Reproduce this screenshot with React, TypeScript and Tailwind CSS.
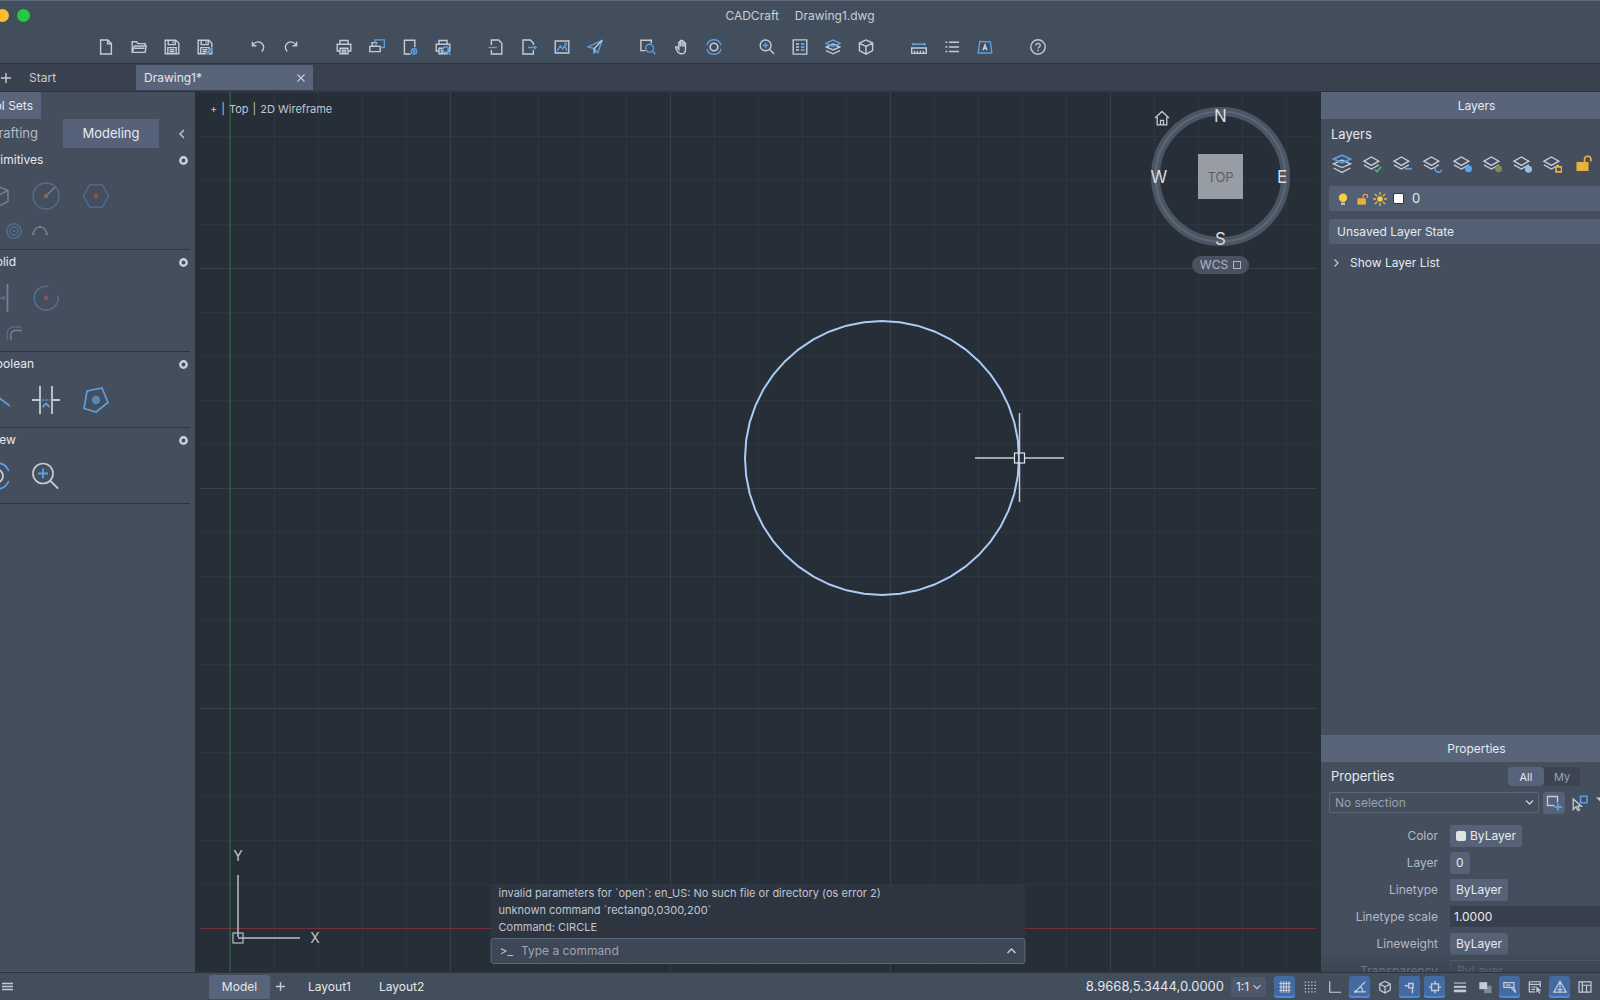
import React from 'react';

const LIGHT = '#c4cbd7';
const BLUE = '#5b9fe3';
const AMBER = '#e9b23c';

type IconProps = {
  className?: string;
  box?: number;
  children: React.ReactNode;
};

function Icon({ className = 'size-4', box = 16, children }: IconProps) {
  return (
    <svg
      className={`shrink-0 ${className}`}
      viewBox={`0 0 ${box} ${box}`}
      fill="none"
      stroke={LIGHT}
      strokeWidth={1.4}
      aria-hidden="true"
    >
      {children}
    </svg>
  );
}

const printer = (
  <>
    <path d="M4 5V1.500h8V5M4 12H1.200V5.200h13.600V12H12" />
    <path d="M4 9.200h8v5.600H4zM5.600 11.200h4.800M5.600 13h4.800" />
  </>
);

const floppy = (
  <>
    <path d="M1.200 1.200h10.600l3 3v10.600H1.200z" />
    <path d="M4.200 1.200v4.400h7V1.200M3.800 14.800V8.600h8.400v6.200M5.600 10.800h4.800M5.600 12.800h4.800M9 2.600v1.600" />
  </>
);

// Toolbar groups, left to right
const toolbar = [
  [
    { name: 'New', icon: <path d="M2.600 1h7.200l3.600 3.600V15H2.600zM9.600 1.200v3.600h3.600" /> },
    { name: 'Open', icon: <path d="M1.200 13.400V2.800h4.400l1.200 1.800h7.400v2.400M1.200 13.400 3.400 7h11.800l-1 6.400zM3.600 9.200h10" /> },
    { name: 'Save', icon: floppy },
    {
      name: 'Save As',
      icon: (
        <>
          {floppy}
          <path d="m9 15.600.8-2.600 5-5 1.800 1.800-5 5z" fill={BLUE} stroke="#434e5d" strokeWidth={0.5} />
        </>
      ),
    },
  ],
  [
    { name: 'Undo', icon: <path d="M2.400 2.800v4h4M2.600 6.400C4.600 3.400 8 2.200 10.800 3.600c3.400 1.800 3.800 6 1 9" /> },
    { name: 'Redo', icon: <path d="M13.600 2.800v4h-4M13.400 6.400C11.400 3.400 8 2.200 5.200 3.600c-3.400 1.800-3.800 6-1 9" /> },
  ],
  [
    { name: 'Print', icon: printer },
    {
      name: 'Batch Print',
      icon: (
        <>
          <path d="M3 7.400V3.600h5M.8 7.400h10.400v5.200H.8zM3.400 7.200h5.400" />
          <path d="M6 4V.9h9.400v7.600h-4" stroke={BLUE} />
          <path d="M5.600 6.800 8.200 4.200" stroke={BLUE} />
        </>
      ),
    },
    {
      name: 'Page Setup',
      icon: (
        <>
          <path d="M8.600 15H2.400V1.200h10.400v7" />
          <circle cx="12" cy="12.400" r="2.600" stroke={BLUE} />
          <circle cx="12" cy="12.400" r=".6" stroke={BLUE} />
        </>
      ),
    },
    {
      name: 'Print Preview',
      icon: (
        <>
          {printer}
          <circle cx="10.600" cy="10.600" r="2.800" stroke={BLUE} fill="#434e5d" strokeWidth={1.600} />
          <path d="m12.600 12.800 2.800 2.800" stroke={BLUE} strokeWidth={1.700} />
        </>
      ),
    },
  ],
  [
    {
      name: 'Import',
      icon: (
        <>
          <path d="M3.400 6V1h7.200l3.200 3.200V15H3.400v-4" />
          <path d="M.4 8.500h8.400" stroke={BLUE} />
        </>
      ),
    },
    {
      name: 'Export',
      icon: (
        <>
          <path d="M12.400 6V4.200L9.400 1H2v14h10.400v-4" />
          <path d="M7 8.500h8.400M13.400 6.900l1.800 1.600-1.800 1.600" stroke={BLUE} />
        </>
      ),
    },
    {
      name: 'Insert Image',
      icon: (
        <>
          <path d="M1.200 2h13.600v12H1.200z" />
          <path d="m3 12 3.400-5 2.400 3 2-3.600L13 12M10.200 4.400h2.200v2.200" stroke={BLUE} />
        </>
      ),
    },
    {
      name: 'Share',
      icon: (
        <>
          <path d="m.9 7.800 14.200-6.400L10.800 13.800 7.200 9.600z" stroke={BLUE} />
          <path d="M7.200 14.600V9.600l7.900-8.200" />
          <path d="m6.600 14.400 2.600-2.600" stroke={BLUE} />
        </>
      ),
    },
  ],
  [
    {
      name: 'Zoom Window',
      icon: (
        <>
          <path d="M5.400 11.600H.9V1.200h10.400v3" />
          <circle cx="9.600" cy="9.200" r="3.900" stroke={BLUE} />
          <path d="m12.400 12 3 3.200" stroke={BLUE} />
        </>
      ),
    },
    {
      name: 'Pan',
      icon: (
        <path
          d="M5 9V3.600c0-1.200 1.600-1.200 1.600 0V7.500 2.200c0-1.300 1.800-1.300 1.800 0v5.200-4.600c0-1.200 1.700-1.200 1.700 0v5-3.200c0-1.200 1.600-1.200 1.600 0v5.600c0 3-1.600 4.600-4.200 4.600-2.400 0-3.400-1.200-4.200-3L1.900 8.900c-.4-1.200 1-1.700 1.600-.7L5 10.400z"
          transform="translate(.8 0)"
        />
      ),
    },
    {
      name: 'Orbit',
      icon: (
        <>
          <circle cx="8" cy="8" r="3.800" strokeWidth={1.600} />
          <path d="M1 6.200A7.200 7.200 0 0 1 15 6.200M15 9.800A7.200 7.200 0 0 1 1 9.800" stroke={BLUE} />
        </>
      ),
    },
  ],
  [
    {
      name: 'Zoom In',
      icon: (
        <>
          <circle cx="6.600" cy="6.400" r="5.400" />
          <path d="m10.600 10.400 4.600 4.600" />
          <path d="M6.600 3.600v5.600M3.800 6.400h5.600" stroke={BLUE} strokeWidth={1.600} />
        </>
      ),
    },
    {
      name: 'Properties',
      icon: (
        <>
          <path d="M1.200.9h13.600v14.200H1.200zM4 5h3M4 8h3M4 11h3" />
          <path d="M9 5h3.400M9 8h3.400M9 11h3.400" stroke={BLUE} strokeWidth={1.800} />
        </>
      ),
    },
    {
      name: 'Layers',
      icon: (
        <>
          <path d="m8 5 6.800 3L8 11 1.200 8zM1 11.600l7 3.200 7-3.200" />
          <path d="M1 4.400 8 1l7 3.400L8 7.600z" stroke={BLUE} />
        </>
      ),
    },
    { name: '3D View', icon: <path d="M8 .9 14.600 4v7.600L8 15.100 1.400 11.600V4zM1.400 4 8 7.400 14.600 4M8 7.400v7.700" /> },
  ],
  [
    {
      name: 'Measure',
      icon: (
        <>
          <path d="M.7 9h14.600v5.400H.7zM3.600 11.800v2.400M6.400 11.800v2.400M9.400 11.800v2.400M12.400 11.800v2.400" />
          <path d="M1 5.200h14" stroke={BLUE} strokeWidth={1.700} />
          <path d="M2.500 3.800v2.800M13.500 3.800v2.800" stroke={BLUE} strokeWidth={1} />
        </>
      ),
    },
    { name: 'List', icon: <path d="M5 3.200h10M5 8h10M5 12.600h10M1.400 3.200h2M1.400 8h2M1.400 12.600h2" strokeWidth={1.500} /> },
    {
      name: 'Text Style',
      icon: (
        <>
          <path d="M2.800 2.400 13.400 3l1.400 11H1.200z" stroke={BLUE} />
          <path d="m6 11.200 2-5.400 2 5.400M6.600 9.600h2.800" strokeWidth={1.500} />
        </>
      ),
    },
  ],
  [
    {
      name: 'Help',
      icon: (
        <>
          <circle cx="8" cy="8" r="7.200" />
          <path d="M5.900 6.400c0-2.700 4.300-2.700 4.300 0 0 1.600-2.100 1.500-2.100 3.100M8.100 10.800v1.500" />
        </>
      ),
    },
  ],
];

type Tool = { name: string; icon: React.ReactNode; dim?: boolean };
type Section = { title: string; large: Tool[]; small?: Tool[] };

const sections: Section[] = [
  {
    title: 'Primitives',
    large: [
      { name: 'Box', dim: true, icon: <path d="M14 3.500 26 8.500v11l-12 6-12-6v-11zM2 8.500l12 6 12-6M14 14.500v11" /> },
      {
        name: 'Sphere',
        dim: true,
        icon: (
          <>
            <circle cx="14" cy="14" r="13" stroke={BLUE} />
            <path d="m14 14 9-9" />
            <circle cx="14" cy="14" r="2.200" fill="#f08a40" stroke="none" />
          </>
        ),
      },
      {
        name: 'Prism',
        dim: true,
        icon: (
          <>
            <path d="M7.500 3h13L26.500 14l-6 11h-13L1.500 14z" stroke={BLUE} />
            <circle cx="14" cy="14" r="2.400" fill="#e0604a" stroke="none" />
          </>
        ),
      },
    ],
    small: [
      { name: 'Cylinder', dim: true, icon: <circle cx="8" cy="8" r="6" /> },
      {
        name: 'Torus',
        dim: true,
        icon: (
          <>
            <circle cx="8" cy="8" r="7.200" stroke={BLUE} />
            <circle cx="8" cy="8" r="4" stroke={BLUE} />
            <circle cx="8" cy="8" r="1" fill={LIGHT} stroke="none" />
          </>
        ),
      },
      {
        name: 'Arc',
        dim: true,
        icon: (
          <>
            <path d="M1 11C3.500 1.500 12.500 1.500 15 11" />
            <path d="M.2 10h2v2h-2zM13.800 10h2v2h-2zM7 2.800h2v2H7z" fill={LIGHT} stroke="none" />
          </>
        ),
      },
    ],
  },
  {
    title: 'Solid',
    large: [
      {
        name: 'Extrude',
        dim: true,
        icon: (
          <>
            <path d="M25.500 0v28M3 0v28" strokeWidth={1.800} />
            <path d="M12 14h9" stroke={BLUE} />
            <circle cx="21.500" cy="14" r="2" fill={BLUE} stroke="none" />
          </>
        ),
      },
      {
        name: 'Revolve',
        dim: true,
        icon: (
          <>
            <path d="M16 2.200A12 12 0 1 0 26 12" stroke={BLUE} strokeWidth={1.700} />
            <circle cx="14" cy="14" r="2.200" fill="#e0704a" stroke="none" />
          </>
        ),
      },
    ],
    small: [
      { name: 'Fillet', dim: true, icon: <path d="M1 15V8q0-6 7-6h7" /> },
      {
        name: 'Offset',
        dim: true,
        icon: (
          <>
            <path d="M1.200 15V9Q1.200 2 8 2h7" stroke={BLUE} />
            <path d="M4.800 15v-5q0-4.500 4.500-4.500H16" />
          </>
        ),
      },
    ],
  },
  {
    title: 'Boolean',
    large: [
      { name: 'Union', icon: <path d="M4 2 28 20" stroke={BLUE} strokeWidth={1.800} /> },
      {
        name: 'Trim',
        icon: (
          <>
            <path d="M8 0v28M20 0v28M0 14h8M20 14h8" strokeWidth={1.800} />
            <path d="M10 14h8" stroke={BLUE} strokeDasharray="2 1.500" />
            <path d="m10.500 21 3.500-3.500 3.500 3.500" stroke={BLUE} strokeWidth={1.800} />
          </>
        ),
      },
      {
        name: 'Polysolid',
        icon: (
          <>
            <path d="M5 5 20 2l6 14.500L14 26 2 22.500z" stroke={BLUE} strokeWidth={1.700} />
            <circle cx="14" cy="14" r="4.200" fill={BLUE} fillOpacity={0.7} stroke="none" />
          </>
        ),
      },
    ],
  },
  {
    title: 'View',
    large: [
      {
        name: 'Orbit View',
        icon: (
          <>
            <circle cx="14" cy="14" r="7" strokeWidth={1.800} />
            <path d="M2 9A13.500 13.500 0 0 1 26.800 9M26.800 19A13.500 13.500 0 0 1 2 19" stroke={BLUE} strokeWidth={1.800} />
          </>
        ),
      },
      {
        name: 'Zoom View',
        icon: (
          <>
            <circle cx="11" cy="11.500" r="10" strokeWidth={1.700} />
            <path d="m18.200 18.700 8 8" strokeWidth={1.900} />
            <path d="M11 6.500v10M6 11.500h10" stroke={BLUE} strokeWidth={1.800} />
          </>
        ),
      },
    ],
  },
];

const sheet = <path d="M2 7.200 9.400 3l7.400 4.200-7.400 4.200zM2 10.800l7.400 4.200 7.400-4.200" />;

const openLock = (
  <>
    <path d="M3.500 9h12v9h-12z" fill={AMBER} stroke="none" />
    <path d="M11.500 9V6.500a3.200 3.200 0 0 1 6.400 0v2" stroke={AMBER} strokeWidth={1.600} />
  </>
);

const layerTools: Tool[] = [
  {
    name: 'Layer manager',
    icon: (
      <>
        <path d="M1.500 9.800 10 6l8.500 3.800L10 13.600zM1.500 14l8.500 4.400 8.500-4.400" />
        <path d="M1.500 5 10 1.200 18.500 5 10 8.800z" stroke={BLUE} strokeWidth={1.600} />
      </>
    ),
  },
  { name: 'Make current', icon: <>{sheet}<path d="m13 15.500 2 2.300 4.200-5" stroke="#52b56b" strokeWidth={1.600} /></> },
  { name: 'Previous layer', icon: <>{sheet}<path d="M13 14.800h7" stroke={BLUE} strokeWidth={1.800} /></> },
  { name: 'Match layer', icon: <>{sheet}<path d="M14 12.500a3.400 3.400 0 1 0 5.800 3.200" stroke={BLUE} strokeWidth={1.700} /></> },
  { name: 'Isolate layer', icon: <>{sheet}<circle cx="16.500" cy="14.800" r="3.500" fill="#55a5f2" stroke="none" /></> },
  { name: 'Hide layer', icon: <>{sheet}<circle cx="16.500" cy="14.800" r="3.500" fill="#868852" stroke="none" /></> },
  { name: 'Freeze layer', icon: <>{sheet}<circle cx="16.500" cy="15.200" r="3.500" fill="#93bfe8" stroke="none" /></> },
  { name: 'Lock layer', icon: <>{sheet}<path d="M14 12.800h5.600v5H14z" stroke={AMBER} strokeWidth={1.700} /></> },
  { name: 'Unlock layer', icon: <g transform="translate(1 -1)">{openLock}</g> },
];

const statusTools = [
  { name: 'Grid', on: true, icon: <path d="M1.500 4h13M1.500 8h13M1.500 12h13M3.500 1.500v13M6.500 1.500v13M9.500 1.500v13M12.500 1.500v13" /> },
  { name: 'Snap', on: false, icon: <path d="M2 2.500h13M2 6.200h13M2 9.900h13M2 13.600h13" strokeDasharray="1.500 2.200" strokeWidth={1.500} /> },
  { name: 'Ortho', on: false, icon: <path d="M2 1.500V14h13" /> },
  {
    name: 'Polar tracking',
    on: true,
    icon: (
      <>
        <path d="M14 2 2.500 13.500H15M8.500 8q3 2 2.500 5.500" />
        <circle cx="2.800" cy="13.200" r="1.500" fill={LIGHT} stroke="none" />
      </>
    ),
  },
  { name: 'Isometric', on: false, icon: <path d="M8 1.500 14 4.500v7L8 14.800 2 11.500v-7zM2 4.500 8 7.800l6-3.300M8 7.800v7" /> },
  { name: 'Object tracking', on: true, icon: <path d="M2 6.500h4M6.500 4h5v5h-5zM10.800 9v6" strokeWidth={1.600} /> },
  { name: 'Object snap', on: true, icon: <path d="M4 4.500h8v7.500H4zM8 1v3.500M8 12v3.500M1 8.200h3M12 8.200h3" strokeWidth={1.500} /> },
  {
    name: 'Lineweight display',
    on: false,
    icon: (
      <>
        <path d="M1 3.500h14" strokeWidth={1.200} />
        <path d="M1 7.800h14" strokeWidth={2.200} />
        <path d="M1 12.500h14" strokeWidth={3} />
      </>
    ),
  },
  {
    name: 'Transparency display',
    on: false,
    icon: (
      <>
        <path d="M7 6.500h8.500V15H7z" fill="#7f8897" stroke="none" />
        <path d="M1.500 2.500h9v8h-9z" fill={LIGHT} stroke="none" />
      </>
    ),
  },
  { name: 'Dynamic input', on: true, icon: <path d="M1 3h11.500v5.500H1zM3.500 5.800h5M9.500 9l5 5.500M12.500 8.500l2 6" /> },
  {
    name: 'Quick properties',
    on: false,
    icon: (
      <>
        <path d="M1.500 2h12.500v6M8 13.500H1.500V2M1.500 5h12.500M4 8h6M4 10.800h4" />
        <path d="m9.500 7.500 6 4.500-2.800.4 1.300 2.800-1.300.5-1.300-2.800-1.900 1.700z" fill={LIGHT} stroke="none" />
      </>
    ),
  },
  { name: 'Annotation monitor', on: true, icon: <path d="M8 1.500 15 13.800H1zM8 1.500v12.300M5 11h6" /> },
  { name: 'Workspace', on: false, icon: <path d="M1.200 2.200h13.600v11.600H1.200zM5 2.200v11.600M5 6h9.800M9.800 6v7.800" /> },
];

const CENTER = { x: 682, y: 366 };
const RADIUS = 137;
const SEGMENTS = 48;

// The viewport tessellates circles, so this is a many-sided polygon
const circlePoints = Array.from({ length: SEGMENTS }, (_, i) => {
  const angle = (i / SEGMENTS) * Math.PI * 2;
  return `${(CENTER.x + RADIUS * Math.cos(angle)).toFixed(2)},${(CENTER.y + RADIUS * Math.sin(angle)).toFixed(2)}`;
}).join(' ');

function TitleBar() {
  return (
    <header className="shrink-0 border-t border-b border-t-[#5c6a7b] border-b-[#2c3541] bg-[#434e5d]">
      <div className="grid h-[29px] grid-cols-[1fr_auto_1fr] items-center">
        <div className="flex gap-2 pl-[7px]">
          <button aria-label="Close window" className="size-[13px] rounded-full bg-[#ff5f57]" />
          <button aria-label="Minimize window" className="size-[13px] rounded-full bg-[#febc2e]" />
          <button aria-label="Zoom window" className="size-[13px] rounded-full bg-[#28c840]" />
        </div>
        <h1 className="flex gap-4 text-[12px] text-[#c8cfd9]">
          <span>CADCraft</span>
          <span>Drawing1.dwg</span>
        </h1>
      </div>
      <div className="flex h-[33px] items-center gap-[37px] pl-[130px]">
        {toolbar.map((group) => (
          <div key={group[0].name} className="flex gap-[17px]">
            {group.map((tool) => (
              <button key={tool.name} aria-label={tool.name}>
                <Icon>{tool.icon}</Icon>
              </button>
            ))}
          </div>
        ))}
      </div>
    </header>
  );
}

function FileTabs() {
  return (
    <nav aria-label="Open files" className="flex h-7 shrink-0 items-center border-b border-[#2b333e] bg-[#39414e] text-[12px]">
      <button aria-label="New tab" className="ml-8 flex w-3 justify-center">
        <Icon className="size-3" box={12}>
          <path d="M6 1v10M1 6h10" />
        </Icon>
      </button>
      <button className="w-[124px] pl-[17px] text-left text-[#c3cad5]">Start</button>
      <div className="flex h-[25px] w-[177px] items-center justify-between bg-[#58647a] px-2">
        <button className="text-[#e2e7ee]">Drawing1*</button>
        <button aria-label="Close Drawing1">
          <Icon className="size-2" box={8}>
            <path d="m.5.5 7 7M7.500.5l-7 7" strokeWidth={1.200} />
          </Icon>
        </button>
      </div>
    </nav>
  );
}

function ToolSets() {
  return (
    <aside className="flex w-[227px] shrink-0 flex-col bg-[#454e5d] text-[12px] text-[#e6eaf0]">
      <h2 className="h-[27px] w-[73px] bg-[#58647a] pr-2 text-right leading-[27px] whitespace-nowrap">Tool Sets</h2>
      <div className="flex h-[29px] items-stretch">
        <button className="w-[95px] pr-[25px] text-right text-[13px] text-[#b3bac6]">Drafting</button>
        <button className="w-24 bg-[#56627a] text-[13px]">Modeling</button>
        <button aria-label="Collapse tool sets" className="ml-[18px]">
          <Icon className="size-[10px]" box={10}>
            <path d="M7 1 3 5l4 4" />
          </Icon>
        </button>
      </div>
      {sections.map((section) => (
        <section key={section.title} className="mr-[5px] border-b border-[#2c3544] pb-[5px]">
          <div className="flex h-6 items-center justify-between pr-[2px] pl-5">
            <h3>{section.title}</h3>
            <button aria-label={`${section.title} settings`}>
              <Icon className="size-[9px]" box={9}>
                <circle cx="4.500" cy="4.500" r="3.200" strokeWidth={2.400} stroke="#ccd3dd" />
              </Icon>
            </button>
          </div>
          <div className="flex h-[46px] items-center gap-[22px] pt-[2px] pl-[14px]">
            {section.large.map((tool) => (
              <button key={tool.name} aria-label={tool.name} className={tool.dim ? 'opacity-40' : ''}>
                <Icon className="size-7" box={28}>{tool.icon}</Icon>
              </button>
            ))}
          </div>
          {section.small && (
            <div className="flex h-[26px] items-center gap-[10px] pl-3">
              {section.small.map((tool) => (
                <button key={tool.name} aria-label={tool.name} className={tool.dim ? 'opacity-40' : ''}>
                  <Icon>{tool.icon}</Icon>
                </button>
              ))}
            </div>
          )}
        </section>
      ))}
    </aside>
  );
}

function Drawing() {
  return (
    <svg className="absolute inset-y-0 left-[5px] h-full w-[calc(100%-10px)]" fill="none" aria-label="Model space">
      <defs>
        <pattern id="minor" width="44" height="44" patternUnits="userSpaceOnUse" patternTransform="translate(30 836)">
          <path d="M.5 0v44M0 .5h44" stroke="#2d3540" />
        </pattern>
        <pattern id="major" width="220" height="220" patternUnits="userSpaceOnUse" patternTransform="translate(30 836)">
          <path d="M.5 0v220M0 .5h220" stroke="#38414b" />
        </pattern>
      </defs>
      <rect width="100%" height="100%" fill="url(#minor)" />
      <rect width="100%" height="100%" fill="url(#major)" />
      <line x1="0" x2="100%" y1="836.500" y2="836.500" stroke="#74303a" />
      <line x1="30" x2="30" y1="0" y2="100%" stroke="#2a6a3a" />

      <polygon points={circlePoints} stroke="#a9cdf5" strokeWidth="2" />
      <path d="M775 366h39.500M824.500 366H864M819.500 321v39.500M819.500 370.500V410" stroke="#c9ced6" strokeWidth="1.500" />
      <rect x="814.500" y="361" width="10" height="10" stroke="#e3e6ea" strokeWidth="1.200" />

      <path d="M38 783v62M38 846h62" stroke="#b9bfc9" strokeWidth="1.500" />
      <rect x="33" y="841" width="10" height="10" stroke="#b9bfc9" strokeWidth="1.200" />
      <g fill="#bdc3cc" fontSize="14" textAnchor="middle">
        <text x="38" y="769">Y</text>
        <text x="115" y="851">X</text>
      </g>
    </svg>
  );
}

function ViewCube() {
  return (
    <div className="absolute top-[14px] right-[30px] flex flex-col items-center">
      <button aria-label="Home view" className="absolute top-1 left-1">
        <Icon>
          <path d="M1 8 8 1.500 15 8M3.200 7v7.800h9.600V7M6.500 14.800v-4.500h3v4.500" strokeWidth={1.300} />
        </Icon>
      </button>
      <svg className="size-[141px]" viewBox="0 0 141 141" fill="none" role="img" aria-label="Top view, north up">
        <circle cx="70.500" cy="70.500" r="65" stroke="#4c5563" strokeWidth="9" />
        <circle cx="70.500" cy="70.500" r="65" stroke="#5d6675" strokeWidth="2" />
        <path d="M48 48h45v45H48z" fill="#989da5" />
        <text x="70.500" y="75.500" textAnchor="middle" fontSize="13" fill="#585e69">TOP</text>
        <g fill="#d5dae1" fontSize="17" textAnchor="middle">
          <text x="70.500" y="16">N</text>
          <text x="70.500" y="139">S</text>
          <text x="9" y="77">W</text>
          <text x="132" y="77">E</text>
        </g>
      </svg>
      <button className="mt-[9px] flex h-[18px] items-center gap-[5px] rounded-full bg-[#4a5160] px-2 text-[12px] text-[#aeb5c0]">
        WCS
        <span className="size-2 border border-[#aeb5c0]" />
      </button>
    </div>
  );
}

function CommandLine() {
  return (
    <div className="absolute bottom-2 left-1/2 w-[535px] max-w-full -translate-x-1/2">
      <div className="bg-[#2f3642]/85 px-2 pt-px pb-[2px] text-[11px] leading-[17px] text-[#c0c7d2]">
        <p>invalid parameters for `open`: en_US: No such file or directory (os error 2)</p>
        <p>unknown command `rectang0,0300,200`</p>
        <p>Command: CIRCLE</p>
      </div>
      <label className="flex h-[26px] items-center rounded-[3px] border border-[#5d6878] bg-[#3e4755] px-2 text-[12px] text-[#bcc3cf]">
        <span aria-hidden="true">&gt;_</span>
        <input
          type="text"
          aria-label="Command"
          placeholder="Type a command"
          className="ml-2 min-w-0 flex-1 bg-transparent outline-none placeholder:text-[#9ca5b3]"
        />
        <Icon className="size-[10px]" box={10}>
          <path d="M1 7 5 3l4 4" strokeWidth={1.500} />
        </Icon>
      </label>
    </div>
  );
}

function Viewport() {
  return (
    <main className="relative min-w-0 flex-1 overflow-hidden bg-[#262e37]">
      <Drawing />
      <div className="absolute top-[9px] left-[15px] flex gap-1 text-[11px] leading-[17px] text-[#c0c7d2]">
        <span>+</span>
        <span>|</span>
        <button>Top</button>
        <span>|</span>
        <button>2D Wireframe</button>
      </div>
      <ViewCube />
      <CommandLine />
    </main>
  );
}

function LayersPanel() {
  return (
    <section className="flex-1">
      <h2 className="h-[27px] bg-[#58647a] text-center leading-[27px]">Layers</h2>
      <h3 className="px-[10px] pt-1 text-[13px] leading-[22px]">Layers</h3>
      <div className="mt-[9px] flex gap-[10px] pl-[11px]">
        {layerTools.map((tool) => (
          <button key={tool.name} aria-label={tool.name}>
            <Icon className="size-5" box={20}>{tool.icon}</Icon>
          </button>
        ))}
      </div>
      <button className="mt-3 ml-2 flex h-[25px] w-full items-center rounded-[3px] bg-[#535f72] pl-2 text-[13px]">
        <Icon className="size-3" box={12}>
          <circle cx="6" cy="4.800" r="4.200" fill="#f6cf3f" stroke="none" />
          <path d="M4 9.500h4V12H4z" fill="#b9c0cb" stroke="none" />
        </Icon>
        <Icon className="ml-[6px] size-[14px]" box={20}>{openLock}</Icon>
        <Icon className="ml-1 size-[14px]" box={14}>
          <circle cx="7" cy="7" r="2.800" fill="#f3cd48" stroke="none" />
          <path
            d="M7 0v3M7 11v3M0 7h3M11 7h3M2 2l2.200 2.200M9.800 9.800 12 12M12 2 9.800 4.200M4.200 9.800 2 12"
            stroke="#e3bd48"
            strokeWidth={1.300}
          />
        </Icon>
        <span className="ml-[6px] size-[11px] rounded-[2px] border border-[#30363f] bg-white" />
        <span className="ml-2">0</span>
      </button>
      <button className="mt-2 ml-2 block h-[25px] w-full rounded-[3px] bg-[#535f72] pl-2 text-left">
        Unsaved Layer State
      </button>
      <button className="mt-[9px] ml-[11px] flex h-5 items-center gap-[10px]">
        <Icon className="size-2" box={8}>
          <path d="m2.500.5 3.500 3.500-3.500 3.500" strokeWidth={1.200} />
        </Icon>
        Show Layer List
      </button>
    </section>
  );
}

const valueClass = 'inline-flex h-[22px] items-center gap-1 rounded-[3px] bg-[#576276] px-[6px]';
const labelClass = 'w-[117px] text-right text-[#b2b9c5]';

function PropertiesPanel() {
  return (
    <section className="relative h-[237px] shrink-0 overflow-hidden">
      <h2 className="h-[27px] bg-[#58647a] text-center leading-[27px]">Properties</h2>
      <div className="flex items-center pt-[5px]">
        <h3 className="w-[187px] pl-[10px] text-[13px]">Properties</h3>
        <div className="flex h-[19px] rounded-[4px] bg-[#3c4452] text-[11px]">
          <button className="w-9 rounded-[4px] bg-[#57637a]">All</button>
          <button className="w-9 text-[#9aa2b0]">My</button>
        </div>
      </div>
      <div className="flex items-center pt-[5px] pl-2">
        <div className="relative">
          <select
            aria-label="Selection"
            className="block h-[21px] w-[210px] appearance-none rounded-[2px] border border-[#5c6676] bg-transparent px-[5px] text-[#99a1af] outline-none"
          >
            <option>No selection</option>
          </select>
          <Icon className="pointer-events-none absolute top-[6px] right-[5px] size-[9px]" box={9}>
            <path d="M1 2.500 4.500 6 8 2.500" />
          </Icon>
        </div>
        <button aria-label="Add to selection" className="ml-1 flex size-[22px] items-center justify-center rounded-[3px] bg-[#57627a]">
          <Icon>
            <path d="M8.500 10.500H1.500v-9h10v6" />
            <path d="M12 8.500v7M8.500 12H16" stroke={BLUE} strokeWidth={1.900} />
          </Icon>
        </button>
        <button aria-label="Quick select" className="ml-[7px]">
          <Icon className="size-4">
            <path d="M8.500 1.200H15v6.500H8.500z" stroke={BLUE} strokeWidth={1.600} />
            <path d="M1.200 4v10.500l2.800-2.800 1.800 4 1.700-.8-1.700-3.700h3.600z" strokeWidth={1.300} />
          </Icon>
        </button>
        <button aria-label="Filter" className="ml-2">
          <Icon className="size-4">
            <path d="M0 2.500h15L9.500 8.500v5l-3-2v-3z" fill={LIGHT} stroke="none" />
          </Icon>
        </button>
      </div>
      <div className="mt-[11px] flex flex-col gap-[5px] [&>div]:flex [&>div]:h-[22px] [&>div]:items-center [&>div]:gap-3">
        <div>
          <label htmlFor="color" className={labelClass}>Color</label>
          <button id="color" className={valueClass}>
            <span className="size-[10px] rounded-[2px] bg-[#dfe5e6]" />
            ByLayer
          </button>
        </div>
        <div>
          <label htmlFor="layer" className={labelClass}>Layer</label>
          <button id="layer" className={valueClass}>0</button>
        </div>
        <div>
          <label htmlFor="linetype" className={labelClass}>Linetype</label>
          <button id="linetype" className={valueClass}>ByLayer</button>
        </div>
        <div>
          <label htmlFor="scale" className={labelClass}>Linetype scale</label>
          <input id="scale" type="text" defaultValue="1.0000" className="h-[21px] min-w-0 flex-1 bg-[#383f4c] px-1 outline-none" />
        </div>
        <div>
          <label htmlFor="lineweight" className={labelClass}>Lineweight</label>
          <button id="lineweight" className={valueClass}>ByLayer</button>
        </div>
        <div>
          <label htmlFor="transparency" className={labelClass}>Transparency</label>
          <input
            id="transparency"
            type="text"
            defaultValue="ByLayer"
            className="h-[22px] min-w-0 flex-1 border border-[#5c6676] bg-transparent px-[6px] text-[#99a1af] outline-none"
          />
        </div>
      </div>
      <div className="pointer-events-none absolute inset-x-0 bottom-0 h-6 bg-linear-to-t from-[#38414e]/70 to-transparent" />
    </section>
  );
}

function StatusBar() {
  return (
    <footer className="flex h-7 shrink-0 items-center border-t border-[#2b333e] bg-[#434e5d] pr-[37px] text-[12px] text-[#e2e6ed]">
      <button aria-label="Menu" className="ml-[34px]">
        <Icon className="size-[11px]" box={11}>
          <path d="M0 2.500h11M0 5.500h11M0 8.500h11" strokeWidth={1.300} />
        </Icon>
      </button>
      <button className="ml-49 h-6 w-[61px] rounded-[2px] bg-[#58647a]">Model</button>
      <button aria-label="New layout" className="ml-[6px]">
        <Icon className="size-[9px]" box={9}>
          <path d="M4.500 0v9M0 4.500h9" />
        </Icon>
      </button>
      <button className="ml-[23px]">Layout1</button>
      <button className="ml-7">Layout2</button>
      <output className="ml-auto text-[13px]">8.9668,5.3444,0.0000</output>
      <button className="ml-[7px] flex h-5 w-[35px] items-center justify-center gap-1 rounded-[3px] bg-[#4e586a] text-[12px]">
        1:1
        <Icon className="size-2" box={8}>
          <path d="M.5 2.200 4 5.700l3.500-3.500" strokeWidth={1.200} />
        </Icon>
      </button>
      <div className="ml-2 flex gap-1">
        {statusTools.map((tool) => (
          <button
            key={tool.name}
            aria-label={tool.name}
            aria-pressed={tool.on}
            className={`flex h-[22px] w-[21px] items-center justify-center rounded-[3px] ${
              tool.on ? 'bg-[#446aa2] shadow-[inset_0_-2px_0_#4a8be0]' : ''
            }`}
          >
            <Icon className="size-[14px]">{tool.icon}</Icon>
          </button>
        ))}
      </div>
    </footer>
  );
}

export default function App() {
  return (
    <div className="h-screen overflow-hidden bg-[#262e37] font-['Inter',sans-serif]">
      {/* The window is slightly wider than the screen and bleeds off both sides */}
      <div className="-mx-8 flex h-full flex-col">
        <TitleBar />
        <FileTabs />
        <div className="flex min-h-0 flex-1">
          <ToolSets />
          <Viewport />
          <aside className="flex w-[311px] shrink-0 flex-col bg-[#454e5d] text-[12px] text-[#e6eaf0]">
            <LayersPanel />
            <PropertiesPanel />
          </aside>
        </div>
        <StatusBar />
      </div>
    </div>
  );
}
